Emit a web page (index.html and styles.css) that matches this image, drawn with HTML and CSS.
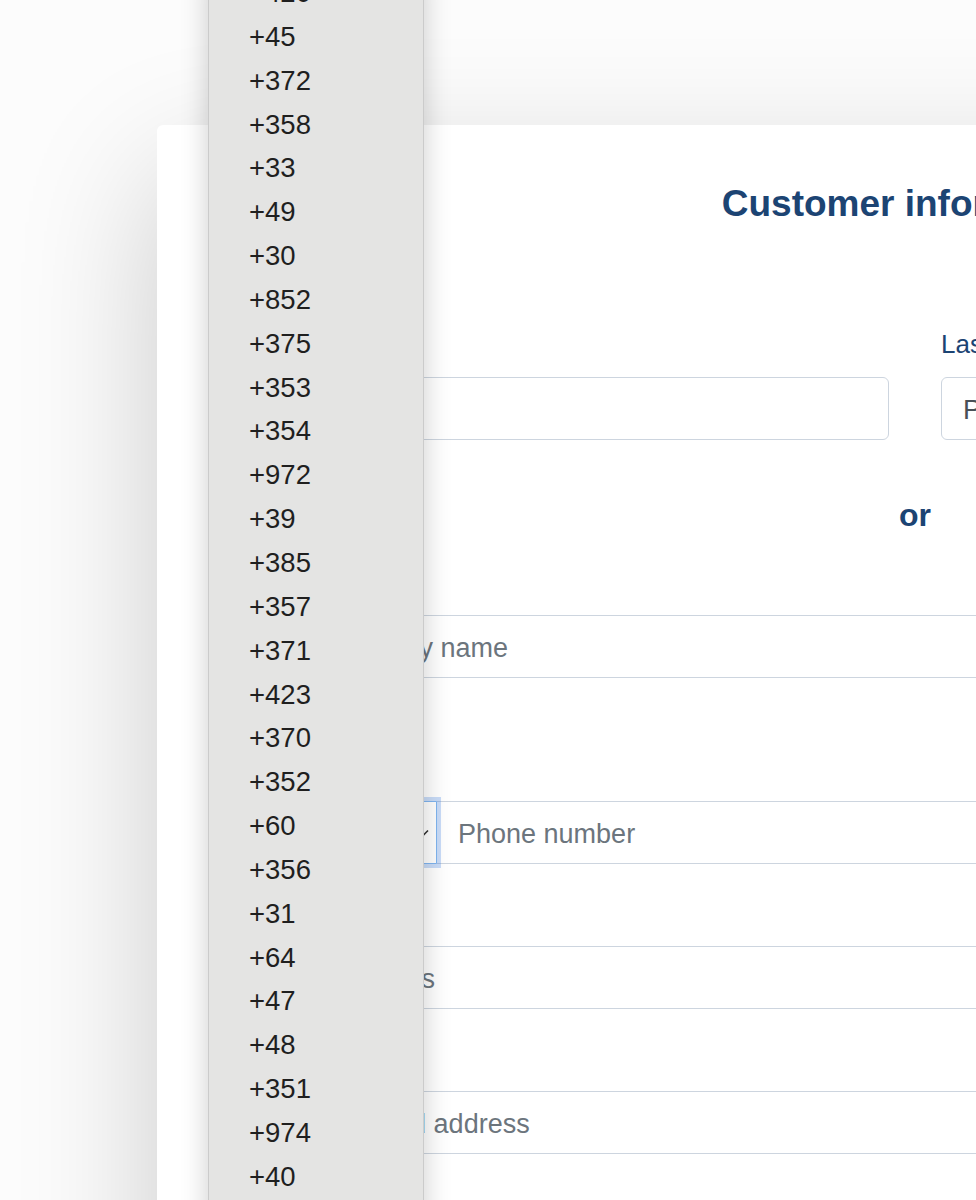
FILE: index.html
```html
<!DOCTYPE html>
<html lang="en">
<head>
<meta charset="utf-8">
<title>Customer information</title>
<link rel="stylesheet" href="styles.css">
</head>
<body>
<div class="page">
  <div class="card">
    <h1 class="title">Customer information</h1>
    <div class="row">
      <div class="group">
        <label class="label">First name</label>
        <input class="input" type="text" value="Anna">
      </div>
      <div class="group">
        <label class="label">Last name</label>
        <input class="input" type="text" value="Pedersen">
      </div>
    </div>
    <div class="or">or</div>
    <div class="group group-company">
      <label class="label">Company</label>
      <input class="input" type="text" placeholder="Official company name">
    </div>
    <div class="group">
      <label class="label">Phone</label>
      <div class="input-group">
        <div class="select">
          <span class="select-value">+46</span>
          <svg class="chevron" width="14" height="9" viewBox="0 0 14 9"><path d="M1 1.5 L7 7.5 L13 1.5" fill="none" stroke="#333" stroke-width="1.6"/></svg>
        </div>
        <input class="input input-phone" type="text" placeholder="Phone number">
      </div>
    </div>
    <div class="group">
      <label class="label">Delivery</label>
      <input class="input" type="text" placeholder="Delivery address">
    </div>
    <div class="group">
      <label class="label">Address</label>
      <input class="input" type="text" placeholder="Enter registered address">
    </div>
  </div>
</div>

<ul class="menu">
  <li>+420</li>
  <li>+45</li>
  <li>+372</li>
  <li>+358</li>
  <li>+33</li>
  <li>+49</li>
  <li>+30</li>
  <li>+852</li>
  <li>+375</li>
  <li>+353</li>
  <li>+354</li>
  <li>+972</li>
  <li>+39</li>
  <li>+385</li>
  <li>+357</li>
  <li>+371</li>
  <li>+423</li>
  <li>+370</li>
  <li>+352</li>
  <li>+60</li>
  <li>+356</li>
  <li>+31</li>
  <li>+64</li>
  <li>+47</li>
  <li>+48</li>
  <li>+351</li>
  <li>+974</li>
  <li>+40</li>
  <li>+421</li>
  <li>+386</li>
</ul>
</body>
</html>
```

FILE: styles.css
```css
html, body {
  margin: 0;
  padding: 0;
  overflow: hidden;
  background: #fcfcfc;
  font-family: "Liberation Sans", Arial, sans-serif;
}

.page {
  padding: 125px 0 0 157px;
  height: 1200px;
  box-sizing: border-box;
}

.card {
  width: 1516px;
  background: #ffffff;
  border-radius: 6px;
  padding: 57px 55px 200px;
  box-sizing: border-box;
  box-shadow: 0 50px 140px rgba(0, 0, 0, 0.2);
}

.title {
  margin: 0 0 99px;
  font-size: 37px;
  line-height: 44px;
  font-weight: bold;
  text-align: center;
  color: #1c4473;
}

.row {
  display: grid;
  grid-template-columns: 1fr 1fr;
  column-gap: 52px;
}

.group {
  margin-bottom: 30px;
}

.row .group {
  margin-bottom: 0;
}

.group-company {
  margin-bottom: 71px;
}

.label {
  display: block;
  font-size: 26px;
  line-height: 38px;
  margin-bottom: 14px;
  color: #1c4473;
}

.input {
  display: block;
  width: 100%;
  height: 63px;
  box-sizing: border-box;
  border: 1px solid #cdd5df;
  border-radius: 6px;
  padding: 3px 21px 0;
  font-family: "Liberation Sans", Arial, sans-serif;
  font-size: 27px;
  color: #495057;
  background: #ffffff;
  outline: none;
}

.input::placeholder {
  color: #6c757d;
  opacity: 1;
}

.or {
  margin: 55px 0 28px;
  font-size: 32px;
  line-height: 40px;
  font-weight: bold;
  text-align: center;
  color: #1c4473;
}

.input-group {
  display: flex;
}

.select {
  position: relative;
  z-index: 1;
  flex: 0 0 225px;
  height: 63px;
  box-sizing: border-box;
  display: flex;
  align-items: center;
  justify-content: space-between;
  padding: 0 7px 0 21px;
  border: 1px solid #80b5f0;
  border-radius: 6px 0 0 6px;
  box-shadow: 0 0 0 4px rgba(60, 130, 230, 0.28);
  font-size: 27px;
  color: #495057;
  background: #ffffff;
}

.chevron {
  margin-top: 2px;
}

.input-phone {
  flex: 1;
  width: auto;
  margin-left: -1px;
  border-radius: 0 6px 6px 0;
}

.menu {
  position: absolute;
  left: 208px;
  top: -30px;
  width: 216px;
  margin: 0;
  padding: 0;
  list-style: none;
  box-sizing: border-box;
  background: #e4e4e3;
  border: 1px solid #cbcbcb;
  box-shadow: 0 4px 26px rgba(0, 0, 0, 0.2);
  z-index: 10;
}

.menu li {
  height: 43.85px;
  line-height: 43.85px;
  padding-left: 40px;
  font-size: 27.5px;
  color: #1f1f1f;
}
```
